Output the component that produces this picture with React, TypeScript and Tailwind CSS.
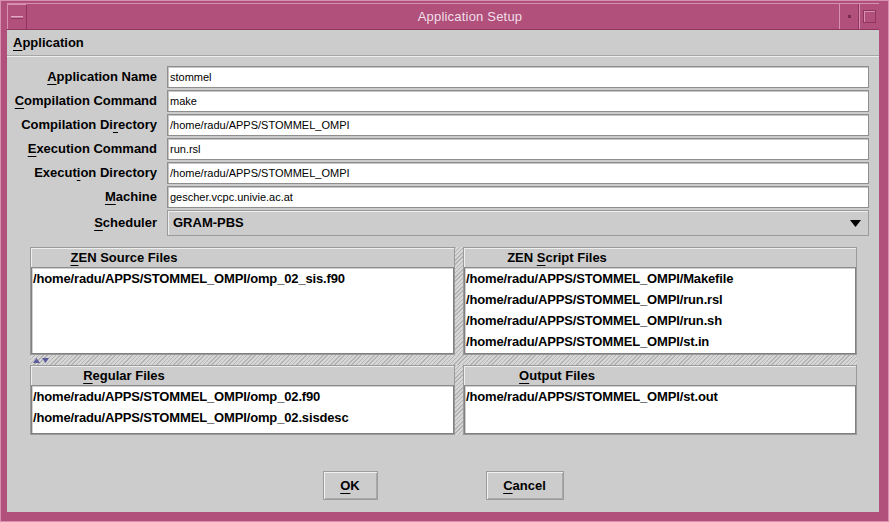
import React from "react"

const fields = [
	{ label: "Application Name", key: "A", pre: "", rest: "pplication Name", value: "stommel" },
	{ label: "Compilation Command", key: "C", pre: "", rest: "ompilation Command", value: "make" },
	{ label: "Compilation Directory", key: "r", pre: "Compilation Di", rest: "ectory", value: "/home/radu/APPS/STOMMEL_OMPI" },
	{ label: "Execution Command", key: "E", pre: "", rest: "xecution Command", value: "run.rsl" },
	{ label: "Execution Directory", key: "i", pre: "Execut", rest: "on Directory", value: "/home/radu/APPS/STOMMEL_OMPI" },
	{ label: "Machine", key: "M", pre: "", rest: "achine", value: "gescher.vcpc.univie.ac.at" },
]

const texture =
	"bg-[repeating-linear-gradient(135deg,#b4b4b4_0px,#b4b4b4_1px,#d6d6d6_1px,#d6d6d6_3px)]"

// Label with an underlined mnemonic letter
const Mnemonic = ({ pre, k, rest }: { pre: string; k: string; rest: string }) => (
	<span>
		{pre}
		<span className="underline underline-offset-[3px] decoration-1">{k}</span>
		{rest}
	</span>
)

const FileList = ({
	title,
	items,
	className,
}: {
	title: React.ReactNode
	items: string[]
	className?: string
}) => (
	<div className={"flex flex-col border border-[#9a9a9a] " + (className ?? "")}>
		<div className="h-[20px] shrink-0 flex items-center border-b border-[#8c8c8c] shadow-[inset_1px_1px_0_#eeeeee] bg-[#cccccc]">
			<div className="w-[186px] text-center font-bold text-[13px]">{title}</div>
		</div>
		<div className="flex-1 bg-white border border-t-0 border-[#808080] shadow-[inset_1px_1px_0_#d0d0d0]">
			{items.map((it) => (
				<div key={it} className="h-[21px] flex items-center pl-[1px] font-bold text-[13px] tracking-[-0.15px] text-black whitespace-nowrap">
					{it}
				</div>
			))}
		</div>
	</div>
)

const Button = ({ children, w }: { children: React.ReactNode; w: string }) => (
	<button
		type="button"
		className={
			"h-[29px] border border-[#9c9c9c] shadow-[inset_1px_1px_0_#f2f2f2,inset_-1px_-1px_0_#a8a8a8] bg-[#cccccc] font-bold text-[13px] text-black " +
			w
		}
	>
		{children}
	</button>
)

export default function App() {
	return (
		<div
			className="w-[889px] h-[522px] bg-[#b0507b] flex flex-col pt-[2px] pl-[6px] pr-[9px] pb-[9px] border border-[#d58fb0] text-black"
			style={{ fontFamily: '"Liberation Sans", Arial, sans-serif' }}
		>
			{/* title bar */}
			<div className="h-[27px] shrink-0 flex items-stretch border-t border-[#d78fb1] border-b border-b-[#8e3560]">
				<div className="w-[20px] flex items-center justify-center border-l border-t border-[#d98fb2] border-r border-r-[#8e3560]">
					<div className="w-[12px] h-[3px] bg-[#c97aa0] border-t border-[#e2a7c2] border-b border-b-[#8e3560]" />
				</div>
				<div className="flex-1 flex items-center justify-center pl-[74px] text-[13px] text-[#f1dfe8] tracking-[0.2px]">
					Application Setup
				</div>
				<div className="w-[20px] flex items-center justify-center border-l border-[#d98fb2] border-r border-r-[#8e3560]">
					<div className="w-[3px] h-[3px] bg-[#7a2a50]" />
				</div>
				<div className="w-[20px] flex items-center justify-center border-l border-[#d98fb2]">
					<div className="w-[13px] h-[13px] border border-[#8e3560] shadow-[inset_1px_1px_0_#d98fb2]" />
				</div>
			</div>

			{/* dialog body */}
			<div className="flex-1 bg-[#cccccc] flex flex-col">
				<div className="h-[26px] shrink-0 flex items-center pl-[6px] font-bold text-[13px] border-b border-[#a6a6a6] shadow-[0_1px_0_#eeeeee]">
					<Mnemonic pre="" k="A" rest="pplication" />
				</div>

				<div className="grid grid-cols-[150px_1fr] gap-x-[10px] gap-y-[2px] pt-[10px] pr-[10px]">
					{fields.map((f) => (
						<React.Fragment key={f.label}>
							<div className="h-[22px] flex items-center justify-end font-bold text-[13px] whitespace-nowrap">
								<Mnemonic pre={f.pre} k={f.key} rest={f.rest} />
							</div>
							<div className="h-[22px] flex items-center bg-white border border-[#8e8e8e] shadow-[inset_1px_1px_0_#c4c4c4] pl-[2px] text-[11px]">
								{f.value}
							</div>
						</React.Fragment>
					))}
					<div className="h-[26px] flex items-center justify-end font-bold text-[13px]">
						<Mnemonic pre="" k="S" rest="cheduler" />
					</div>
					<div className="h-[26px] flex items-center justify-between border border-[#9a9a9a] shadow-[inset_1px_1px_0_#eeeeee] pl-[5px] pr-[7px] font-bold text-[13px]">
						<span>GRAM-PBS</span>
						<svg width="11" height="7" viewBox="0 0 11 7">
							<path d="M0 0 H11 L5.5 7 Z" fill="#000" />
						</svg>
					</div>
				</div>

				{/* split panes */}
				<div className="mt-[11px] ml-[23px] mr-[22px] flex flex-col">
					<div className="h-[108px] grid grid-cols-[425px_8px_1fr]">
						<FileList
							title={<Mnemonic pre="" k="Z" rest="EN Source Files" />}
							items={["/home/radu/APPS/STOMMEL_OMPI/omp_02_sis.f90"]}
						/>
						<div className={texture} />
						<FileList
							title={<Mnemonic pre="ZEN " k="S" rest="cript Files" />}
							items={[
								"/home/radu/APPS/STOMMEL_OMPI/Makefile",
								"/home/radu/APPS/STOMMEL_OMPI/run.rsl",
								"/home/radu/APPS/STOMMEL_OMPI/run.sh",
								"/home/radu/APPS/STOMMEL_OMPI/st.in",
							]}
						/>
					</div>
					<div className={"h-[10px] flex items-center pl-[3px] gap-[2px] " + texture}>
						<svg width="7" height="5" viewBox="0 0 7 5">
							<path d="M0 5 L3.5 0 L7 5 Z" fill="#5c5c9c" />
						</svg>
						<svg width="7" height="5" viewBox="0 0 7 5">
							<path d="M0 0 H7 L3.5 5 Z" fill="#5c5c9c" />
						</svg>
					</div>
					<div className="h-[70px] grid grid-cols-[425px_8px_1fr]">
						<FileList
							title={<Mnemonic pre="" k="R" rest="egular Files" />}
							items={[
								"/home/radu/APPS/STOMMEL_OMPI/omp_02.f90",
								"/home/radu/APPS/STOMMEL_OMPI/omp_02.sisdesc",
							]}
						/>
						<div className={texture} />
						<FileList
							title={<Mnemonic pre="" k="O" rest="utput Files" />}
							items={["/home/radu/APPS/STOMMEL_OMPI/st.out"]}
						/>
					</div>
				</div>

				<div className="flex-1 flex items-center justify-center gap-[108px] pt-[24px]">
					<Button w="w-[55px]">
						<Mnemonic pre="" k="O" rest="K" />
					</Button>
					<Button w="w-[78px]">
						<Mnemonic pre="" k="C" rest="ancel" />
					</Button>
				</div>
			</div>
		</div>
	)
}
